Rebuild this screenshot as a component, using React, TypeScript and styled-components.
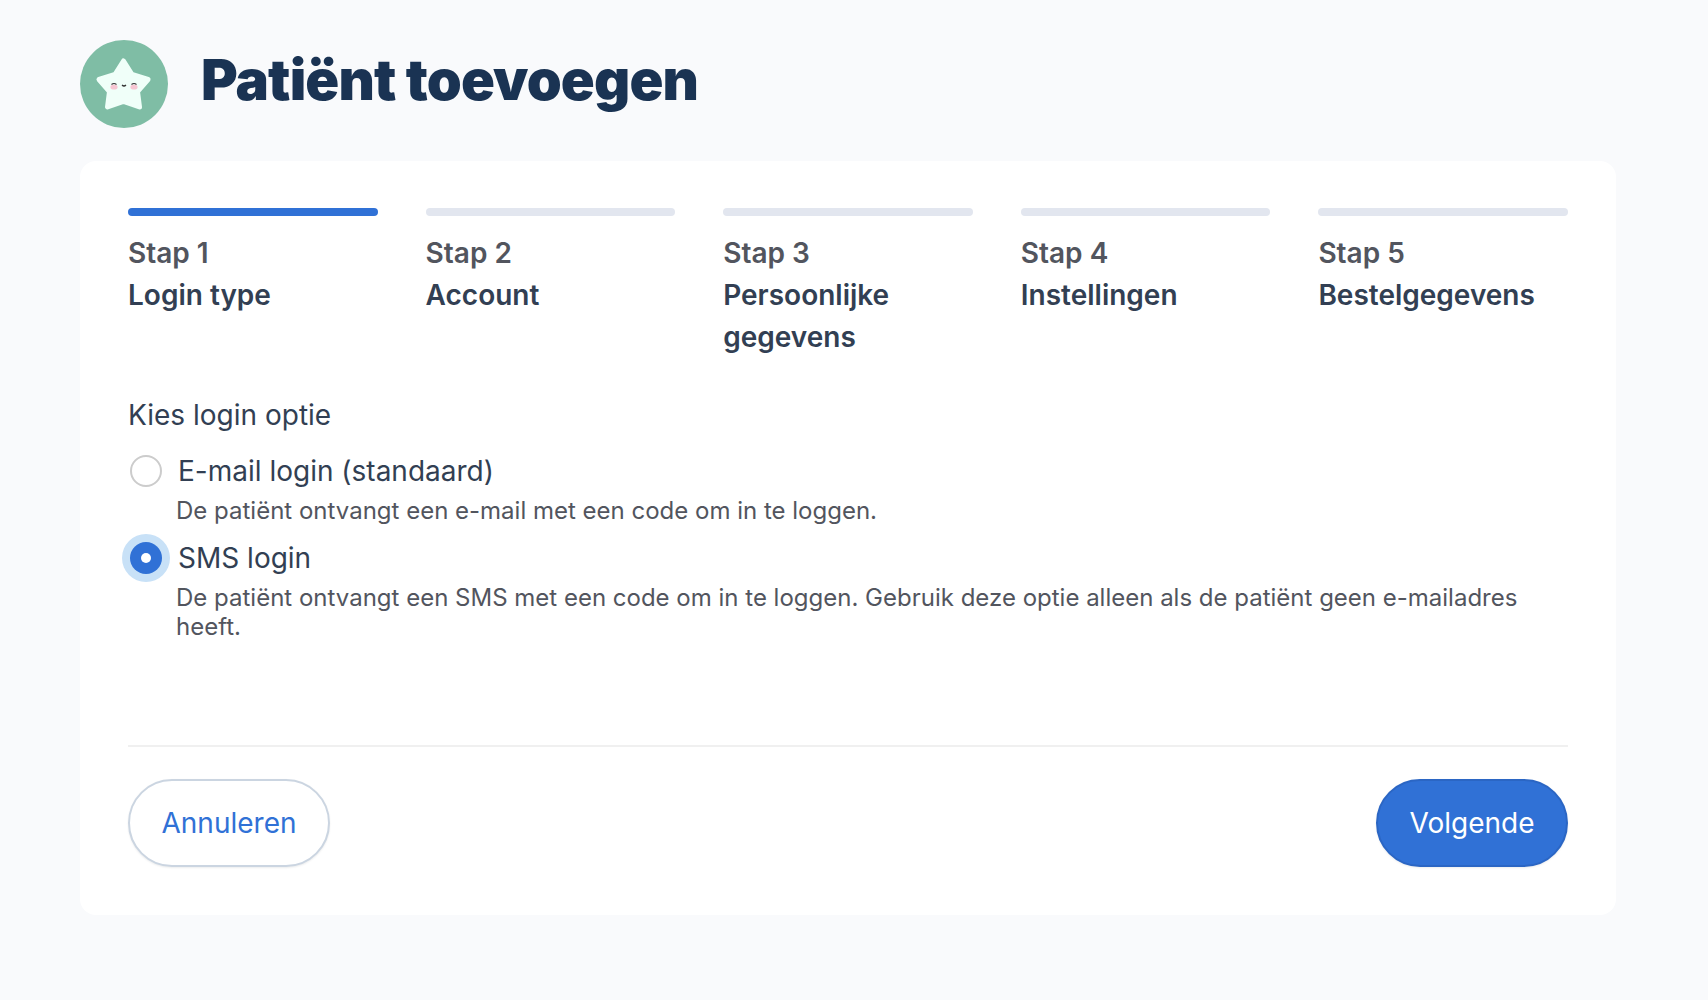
import React from 'react'
import styled, { createGlobalStyle } from 'styled-components'

const GlobalStyle = createGlobalStyle`
  html, body {
    margin: 0;
    padding: 0;
    background: #f9fafc;
  }
  * {
    box-sizing: border-box;
  }
`

const Page = styled.div`
  width: 1708px;
  height: 1000px;
  padding: 40px 92px 0 80px;
  font-family: Inter, "Liberation Sans", sans-serif;
  overflow: hidden;
`

const Header = styled.header`
  display: flex;
  align-items: center;
  gap: 33px;
  height: 88px;
  margin-bottom: 33px;
`

const Title = styled.h1`
  margin: 0 0 8px;
  font-family: Inter, "Liberation Sans", sans-serif;
  font-size: 56px;
  line-height: 72px;
  font-weight: 900;
  letter-spacing: -0.85px;
  color: #1a3353;
`

const Card = styled.main`
  height: 754px;
  padding: 47px 48px 48px;
  background: #ffffff;
  border-radius: 16px;
  display: flex;
  flex-direction: column;
`

const Steps = styled.ol`
  list-style: none;
  margin: 0;
  padding: 0;
  display: grid;
  grid-template-columns: repeat(5, 1fr);
  gap: 48px;
`

const Step = styled.li`
  font-size: 28px;
  line-height: 42px;
  font-weight: 600;
`

const StepBar = styled.div<{ $active?: boolean }>`
  height: 8px;
  margin-bottom: 16px;
  border-radius: 4px;
  background: ${p => (p.$active ? '#3071d6' : '#e2e6ef')};
`

const StepNumber = styled.div`
  color: #52555e;
`

const StepName = styled.div`
  color: #323f53;
`

const Fieldset = styled.section`
  margin-top: 36px;
  flex: 1;
`

const Legend = styled.div`
  font-size: 28px;
  line-height: 42px;
  color: #323f53;
  margin-bottom: 14px;
`

const Option = styled.div`
  display: grid;
  grid-template-columns: 32px 1fr;
  column-gap: 16px;
  align-items: center;
  padding-left: 2px;
  margin-bottom: 12px;
`

const Radio = styled.span<{ $checked?: boolean }>`
  width: 32px;
  height: 32px;
  border-radius: 50%;
  display: flex;
  align-items: center;
  justify-content: center;
  background: ${p => (p.$checked ? '#3071d6' : '#ffffff')};
  border: ${p => (p.$checked ? 'none' : '2px solid #cccccc')};
  box-shadow: ${p => (p.$checked ? '0 0 0 8px #c8e1f7' : 'none')};
`

const Dot = styled.span`
  width: 10px;
  height: 10px;
  border-radius: 50%;
  background: #ffffff;
`

const OptionLabel = styled.span`
  font-size: 28px;
  line-height: 42px;
  color: #323f53;
`

const OptionHelp = styled.p`
  grid-column: 2;
  margin: 4px 0 0 -2px;
  font-size: 24px;
  line-height: 29px;
  color: #52555e;
`

const Footer = styled.footer`
  border-top: 2px solid #f0f0f0;
  padding-top: 32px;
  display: flex;
  justify-content: space-between;
`

const Button = styled.button<{ $primary?: boolean }>`
  height: 88px;
  padding: 0 31.5px;
  border-radius: 44px;
  font-family: inherit;
  font-size: 28px;
  font-weight: 400;
  color: ${p => (p.$primary ? '#ffffff' : '#3071d6')};
  background: ${p => (p.$primary ? '#3071d6' : '#ffffff')};
  border: 2px solid ${p => (p.$primary ? '#2b66c4' : '#cbd5e1')};
  box-shadow: 0 1px 2px rgba(15, 23, 42, 0.08);
`

const Logo = () => (
  <svg width="88" height="88" viewBox="0 0 88 88" aria-hidden="true">
    <circle cx="44" cy="44" r="44" fill="#7fbda5" />
    <path
      d="M43.5 21 L52 34.5 L68 39.5 L57.5 51.5 L59.5 67 L43.5 61.5 L27.5 67 L29.5 51.5 L19 39.5 L35 34.5 Z"
      fill="#f0fff9"
      stroke="#f0fff9"
      strokeWidth="5"
      strokeLinejoin="round"
    />
    <ellipse cx="34" cy="47" rx="3.6" ry="2.6" fill="#f6c6d2" />
    <ellipse cx="54" cy="47" rx="3.6" ry="2.6" fill="#f6c6d2" />
    <path d="M31.5 44.5 Q34 42.5 36.5 44.5" fill="none" stroke="#333" strokeWidth="1.2" />
    <path d="M51.5 44.5 Q54 42.5 56.5 44.5" fill="none" stroke="#333" strokeWidth="1.2" />
    <path d="M42 45 Q44 47 46 45" fill="none" stroke="#333" strokeWidth="1.2" />
  </svg>
)

const steps = [
  { number: 'Stap 1', name: 'Login type' },
  { number: 'Stap 2', name: 'Account' },
  { number: 'Stap 3', name: 'Persoonlijke gegevens' },
  { number: 'Stap 4', name: 'Instellingen' },
  { number: 'Stap 5', name: 'Bestelgegevens' },
]

const App = () => {
  return (
    <Page>
      <GlobalStyle />
      <Header>
        <Logo />
        <Title>Patiënt toevoegen</Title>
      </Header>
      <Card>
        <Steps>
          {steps.map((step, i) => (
            <Step key={step.number}>
              <StepBar $active={i === 0} />
              <StepNumber>{step.number}</StepNumber>
              <StepName>{step.name}</StepName>
            </Step>
          ))}
        </Steps>
        <Fieldset>
          <Legend>Kies login optie</Legend>
          <Option>
            <Radio />
            <OptionLabel>E-mail login (standaard)</OptionLabel>
            <OptionHelp>De patiënt ontvangt een e-mail met een code om in te loggen.</OptionHelp>
          </Option>
          <Option>
            <Radio $checked>
              <Dot />
            </Radio>
            <OptionLabel>SMS login</OptionLabel>
            <OptionHelp>
              De patiënt ontvangt een SMS met een code om in te loggen. Gebruik deze optie alleen als de patiënt geen
              e-mailadres heeft.
            </OptionHelp>
          </Option>
        </Fieldset>
        <Footer>
          <Button>Annuleren</Button>
          <Button $primary>Volgende</Button>
        </Footer>
      </Card>
    </Page>
  )
}

export default App
